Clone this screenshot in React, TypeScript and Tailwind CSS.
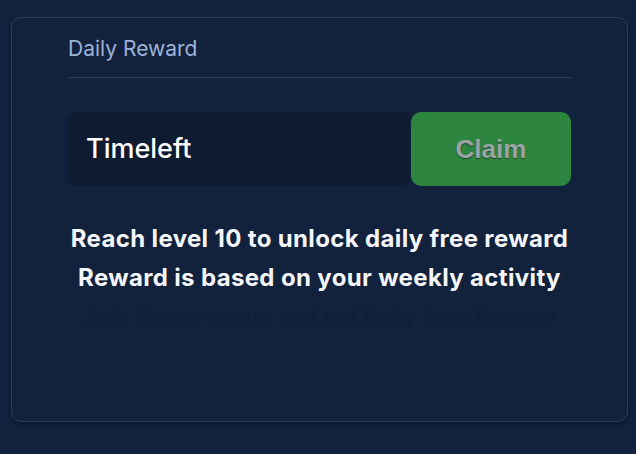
import React from "react";

export default function App() {
  return (
    <div className="w-[636px] h-[454px] bg-[#13233f] pt-[17px] pl-[11px] overflow-hidden" style={{ fontFamily: "Inter, 'Liberation Sans', sans-serif" }}>
      <div className="w-[617px] h-[405px] rounded-[10px] border border-[#2a3c5c] bg-[#12223c] shadow-[0_3px_6px_rgba(5,12,25,0.6)] px-[56px] pt-[17px]">
        <div className="text-[21px] leading-[28px] text-[#9db3d8]">Daily Reward</div>
        <div className="mt-[14px] h-px bg-[#2c3f60]" />
        <div className="mt-[34px] flex h-[74px]">
          <div className="flex-1 rounded-[8px] bg-[#0f1b31] flex items-center pl-[18px]">
            <span className="text-[27px] text-white font-medium">Timeleft</span>
          </div>
          <div className="w-[160px] ml-px rounded-[10px] bg-[#2e8540] flex items-center justify-center">
            <span className="text-[26px] font-bold text-[#9aa3a6] [text-shadow:0_1px_1px_rgba(0,0,0,0.5)]" style={{ fontFamily: "'Liberation Sans', Arial, sans-serif" }}>Claim</span>
          </div>
        </div>
        <div className="mt-[33px] flex flex-col items-center text-[24px] leading-[39px] font-bold text-[#f4f6fa] whitespace-nowrap tracking-[0.35px]">
          <div>Reach level 10 to unlock daily free reward</div>
          <div>Reward is based on your weekly activity</div>
          <div className="text-[22px] tracking-normal text-[#102039]">Join Steam group and get Daily Free Reward</div>
        </div>
      </div>
    </div>
  );
}
